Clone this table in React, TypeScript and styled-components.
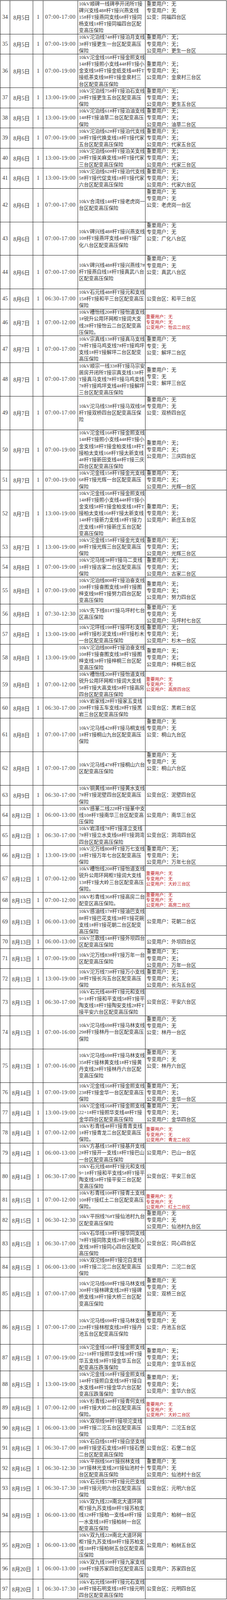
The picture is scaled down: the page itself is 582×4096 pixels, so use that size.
import React from 'react';
import styled, { createGlobalStyle } from 'styled-components';

// one text line of the sheet, in page pixels
const U = 17.17;
const RULE = '#1c1c1c';

type VAlign = 'top' | 'middle' | 'bottom';

interface Outage {
  no: number;
  date: string;
  time: string;
  lines: number;
  desc: string;
  users: string[];
  align?: VAlign;
  red?: boolean;
  pad?: number;
}

const GlobalStyle = createGlobalStyle`
  html, body {
    margin: 0;
    padding: 0;
    background: #fff;
  }
  body {
    font-family: "Liberation Serif", "Noto Sans CJK SC", serif;
    color: #333;
  }
`;

const Sheet = styled.div`
  width: 580.2px;
  margin-top: 1px;
  border-top: 1px solid ${RULE};
  border-left: 1px solid ${RULE};
`;

const Row = styled.div<{ $h: number }>`
  display: grid;
  grid-template-columns: 25px 59.4px 25.7px 88.7px 173px 1fr;
  height: ${(p) => p.$h}px;
  box-sizing: border-box;
  border-bottom: 1px solid ${RULE};
`;

const Cell = styled.div`
  box-sizing: border-box;
  border-right: 1px solid ${RULE};
  display: flex;
  align-items: center;
  justify-content: center;
  overflow: hidden;
  white-space: nowrap;
  font-size: 14px;
`;

const TimeCell = styled(Cell)`
  letter-spacing: 0.9px;
`;

const DescCell = styled(Cell)`
  flex-direction: column;
  align-items: flex-start;
  padding-left: 2.5px;
  font-size: 12.7px;
  line-height: ${U}px;
`;

const UserCell = styled(Cell)<{ $align: VAlign; $red?: boolean; $pad: number }>`
  flex-direction: column;
  align-items: flex-start;
  justify-content: ${(p) =>
    p.$align === 'top' ? 'flex-start' : p.$align === 'bottom' ? 'flex-end' : 'center'};
  padding: ${(p) => p.$pad}px 0 0 ${(p) => (p.$red ? 1.5 : 3)}px;
  font-size: ${(p) => (p.$red ? 11.4 : 12.7)}px;
  line-height: ${(p) => (p.$red ? 13.4 : U)}px;
  color: ${(p) => (p.$red ? '#c0191f' : '#333')};
`;

const Line = styled.div`
  white-space: pre;
`;

const semi = (area: string) => ['重要用户：无；', '专变用户：无；', `公变用户：${area}`];
const short = (area: string) => ['重要用户：无', '专变用户：无', `公变：${area}`];
const full = (area: string) => ['重要用户：无', '专变用户：无', `公变用户：${area}`];
const pub = (area: string) => [`公变用户：${area}`];
const zone = (area: string) => [`公变台区：${area}`];

const outages: Outage[] = [
  { no: 34, date: '8月5日', time: '07:00-17:00', lines: 5, desc: '10kV顺碑一线碑亭开闭所T接|碑兴支线48#杆T接兴燕支线|15#杆T接燕同支线6#杆T接同|杨支线1#杆T接同福四台区配|变高压保险', users: short('同福四台区'), align: 'top' },
  { no: 35, date: '8月5日', time: '07:00-19:00', lines: 3, desc: '10kV沱泊线74#杆T接泊月支线|3#杆T接更生一台区配变高压|保险', users: semi('更生一台区') },
  { no: 36, date: '8月5日', time: '07:00-19:00', lines: 5, desc: '10kV沱金线16#杆T接金照支线|14#杆T接照小支线44#杆T接小|金支线5#杆T接金纸支线4#杆T|接纸茶支线9#杆T接金泉村三|台区配变高压保险', users: semi('金泉村三台区') },
  { no: 37, date: '8月5日', time: '13:00-19:00', lines: 3, desc: '10kV沱泊线75#杆T接泊石支线|2#杆T接更生五台区配变高压|保险', users: semi('更生五台区') },
  { no: 38, date: '8月5日', time: '13:00-19:00', lines: 3, desc: '10kV沱泊线61#杆T接泊油支线|14#杆T接油草二台区配变高压|保险', users: semi('油草二台区') },
  { no: 39, date: '8月6日', time: '07:00-19:00', lines: 3, desc: '10kV沱泊线62#杆T接泊代支线|3#杆T接代换支线1#杆T接代家|五台区配变高压保险', users: semi('代家五台区') },
  { no: 40, date: '8月6日', time: '13:00-19:00', lines: 3, desc: '10kV沱泊线60#杆T接泊关支线|2#杆T接关麻支线3#杆T接代家|三台区配变高压保险', users: semi('代家三台区') },
  { no: 41, date: '8月6日', time: '13:00-19:00', lines: 3, desc: '10kV沱泊线62#杆T接泊代支线|5#杆T接代促支线1#杆T接代家|六台区配变高压保险', users: semi('代家六台区') },
  { no: 42, date: '8月6日', time: '07:00-17:00', lines: 5, desc: '10kV合湾线14#杆T接老虎岗一|台区配变高压保险', users: short('老虎岗一台区'), align: 'top' },
  { no: 43, date: '8月6日', time: '07:00-17:00', lines: 5, desc: '10kV碑兴线48#杆T接兴燕支线|10#杆T接燕坪支线4#杆T接广|化八台区配变高压保险', users: short('广化八台区'), align: 'top' },
  { no: 44, date: '8月6日', time: '07:00-17:00', lines: 5, desc: '10kV碑兴线48#杆T接兴燕线7#|杆T接燕白线1#杆T接真武八台|区配变高压保险', users: short('真武八台区'), align: 'top' },
  { no: 45, date: '8月6日', time: '06:30-17:00', lines: 3, desc: '10kV石元线48#杆T接元和支线|15#杆T接和平三台区配变高压|保险', users: zone('和平三台区') },
  { no: 46, date: '8月7日', time: '07:00-12:00', lines: 4, desc: '10kV槽怡线20#杆T接怡道支线|1#锐升公用环网柜T接润大支|线2#杆T接怡云二台区配变高|压保险。', users: full('怡云二台区'), red: true },
  { no: 47, date: '8月7日', time: '07:00-17:00', lines: 4, desc: '10kV宗真线13#杆T接真马支线|7#杆T接马鸡支线7#杆T接鸡坪|支线1#杆T接解坪二台区配变|高压保险', users: ['重要用户：无', '专变：无', '公变：解坪二台区'], align: 'top' },
  { no: 48, date: '8月7日', time: '07:00-17:00', lines: 5, desc: '10kV顺宗一线33#杆T接马宗安|居房开闭所T接宗真支线13#杆|T接真马支线7#杆T接马鸡支线|7#杆T接鸡坪支线4#杆T接解坪|三台区配变高压保险', users: ['重要用户：无', '专变：无', '公变：解坪三台区'], align: 'top', pad: 10 },
  { no: 49, date: '8月7日', time: '07:00-17:00', lines: 5, desc: '10kV沱马线53#杆T接马双线5#|杆T接双桥四台区配变高压保|险', users: short('双桥四台区'), align: 'top' },
  { no: 50, date: '8月7日', time: '07:00-19:00', lines: 6, desc: '10kV沱金线16#杆T接金照支线|14#杆T接照小支线44#杆T接小|金支线5#杆T接金柏支线1#杆T|接柏太支线16#杆T接太新支线|4#杆T接新田支线4#杆T接三庆|四台区配变高压保险', users: semi('三庆四台区') },
  { no: 51, date: '8月7日', time: '07:00-19:00', lines: 3, desc: '10kV沱金线15#杆T接金光支线|6#杆T接光辉一台区配变高压|保险', users: semi('光辉一台区') },
  { no: 52, date: '8月7日', time: '13:00-19:00', lines: 7, desc: '10kV沱金线16#杆T接金照支线|14#杆T接照小支线44#杆T接小|金支线5#杆T接金柏支线1#杆T|接柏太支线16#杆T接太新支线|14#杆T接新力支线1#杆T接力|庄支线1#杆T接新庄五台区配|变高压保险', users: semi('新庄五台区') },
  { no: 53, date: '8月7日', time: '13:00-19:00', lines: 3, desc: '10kV沱金线15#杆T接金光支线|8#杆T接光辉三台区配变高压|保险', users: semi('光辉三台区') },
  { no: 54, date: '8月8日', time: '07:00-19:00', lines: 3, desc: '10kV沱马线3#杆T接马二支线|1#杆T接古家二台区配变高压|保险', users: semi('古家二台区') },
  { no: 55, date: '8月8日', time: '07:00-19:00', lines: 4, desc: '10kV沱泊线80#杆T接泊奋支线|10#杆T接奋图支线3#杆T接图|梓支线9#杆T接努力四台区配|变高压保险', users: semi('努力四台区') },
  { no: 56, date: '8月8日', time: '07:30-12:30', lines: 3, desc: '10kV先下线81#T接马坪村七台|区高压保险', users: full('马坪村七台区') },
  { no: 57, date: '8月8日', time: '13:00-19:00', lines: 3, desc: '10kV沱坪线19#杆T接坪杉支线|4#杆T接杉泥支线1#杆T接杉木|一台区配变高压保险', users: semi('杉木一台区') },
  { no: 58, date: '8月8日', time: '13:00-19:00', lines: 4, desc: '10kV沱泊线80#杆T接泊奋支线|10#杆T接奋图支线3#杆T接图|梓支线3#杆T接梓桐三台区配|变高压保险', users: semi('梓桐三台区') },
  { no: 59, date: '8月8日', time: '07:00-12:00', lines: 4, desc: '10kV槽怡线20#杆T接怡道支线|锐升公用环网柜T接润大支线|5#杆T接大高支线5#杆T接高房|四台区配变高压保险', users: full('高房四台区'), red: true },
  { no: 60, date: '8月8日', time: '06:30-17:00', lines: 3, desc: '10kV岩家线2#杆T接家五支线|20#杆T接五车支线2#杆T接黑|岩三台区配变高压保险', users: zone('黑岩三台区') },
  { no: 61, date: '8月8日', time: '07:00-17:00', lines: 5, desc: '10kV沱马线42#杆T接马桐支线|1#杆T接桐山九台区配变高压|保险', users: short('桐山九台区'), align: 'top' },
  { no: 62, date: '8月8日', time: '07:00-17:00', lines: 5, desc: '10kV沱马线47#杆T接桐山六台|区配变高压保险', users: short('桐山六台区'), align: 'top' },
  { no: 63, date: '8月9日', time: '06:30-17:00', lines: 3, desc: '10kV铜黄线38#杆T接黄水支线|7#杆T接泥壁四台区配变高压|保险', users: zone('泥壁四台区') },
  { no: 64, date: '8月12日', time: '06:00-13:00', lines: 3, desc: '10kV感篆二线22#杆T接篆中支|线10#杆T接南华三台区配变高|压保险', users: pub('南华三台区') },
  { no: 65, date: '8月12日', time: '06:30-17:00', lines: 3, desc: '10kV岩泽线7#杆T接泽立支线|7#杆T接立水支线6#杆T接洞湾|四台区配变高压保险', users: zone('洞湾四台区') },
  { no: 66, date: '8月12日', time: '13:00-19:00', lines: 3, desc: '10kV沱万线80#杆T接万七支线|1#杆T接万年七台区配变高压|保险', users: semi('万年七台区') },
  { no: 67, date: '8月12日', time: '07:00-12:00', lines: 4, desc: '10kV槽怡线20#杆T接怡道支线|锐升公用环网柜T接润大支线|13#杆T接大岭三台区配变高压|保险。', users: full('大岭三台区'), red: true },
  { no: 68, date: '8月13日', time: '07:00-12:00', lines: 2.36, desc: '10kV杉青线36#杆T接高房二台|配变区高压保险。', users: full('高房二台区'), red: true, align: 'bottom' },
  { no: 69, date: '8月13日', time: '06:00-13:00', lines: 4, desc: '10kV感油线17#杆T接油巴支线|8#杆T接巴花支线3#杆T接花碗|支线1#杆T接花朝二台区配变|高压保险', users: pub('花朝二台区') },
  { no: 70, date: '8月13日', time: '06:00-13:00', lines: 2, desc: '10kV兰歌线14#杆T接外坝四台|区配变高压保险', users: pub('外坝四台区') },
  { no: 71, date: '8月13日', time: '07:00-19:00', lines: 3, desc: '10kV沱万线83#杆T接万年一台|区配变高压保险', users: semi('万年一台区') },
  { no: 72, date: '8月13日', time: '13:00-19:00', lines: 3, desc: '10kV沱万线73#杆T接万小支线|3#杆T接长沟五台区配变高压|保险', users: semi('长沟五台区') },
  { no: 73, date: '8月13日', time: '06:30-17:00', lines: 4, desc: '10kV石元线48#杆T接元和支线|9+1#杆T接和平支线5#杆T接平|陶支线1#杆T接陶安支线2#杆T|接平安六台区配变高压保险', users: zone('平安六台区') },
  { no: 74, date: '8月13日', time: '07:00-16:00', lines: 5, desc: '10kV沱马线69#杆T接马林支线|29#杆T接林丹一台区配变高压|保险', users: short('林丹一台区'), align: 'top' },
  { no: 75, date: '8月13日', time: '07:00-16:00', lines: 5, desc: '10kV沱马线69#杆T接马林支线|35#杆T接林黄支线1#杆T接黄|丹支线2#杆T接林丹六台区配|变高压保险', users: short('林丹六台区'), align: 'top' },
  { no: 76, date: '8月14日', time: '07:00-19:00', lines: 3, desc: '10kV沱金线16#杆T接金照支线|23#杆T接金华一台区配变高压|保险', users: semi('金华一台区') },
  { no: 77, date: '8月14日', time: '13:00-19:00', lines: 3, desc: '10kV沱金线16#杆T接金照支线|22+1#杆T接照华支线4#杆T接|金华四台区配变高压保险', users: semi('金华四台区') },
  { no: 78, date: '8月14日', time: '07:00-12:00', lines: 3, desc: '10kV杉青线4#杆T接青青支线|1#杆T接青龙二台区配变高压|保险。', users: full('青龙二台区'), red: true, align: 'bottom' },
  { no: 79, date: '8月14日', time: '06:00-13:00', lines: 3, desc: '10kV方基线15#杆T接基开支线|2#杆T接开一支线1#杆T接巴山|一台区配变高压保险', users: pub('巴山一台区') },
  { no: 80, date: '8月14日', time: '06:30-17:00', lines: 4, desc: '10kV石元线48#杆T接元和支线|9+1#杆T接和平支线5#杆T接平|陶支线5#杆T接平安三台区配|变高压保险', users: zone('平安三台区') },
  { no: 81, date: '8月15日', time: '07:00-12:00', lines: 3, desc: '10kV杉青线10#杆T接青土支线|10#杆T接红土二台区配变高压|保险。', users: full('红土二台区'), red: true, align: 'bottom' },
  { no: 82, date: '8月15日', time: '06:30-12:30', lines: 3, desc: '10kV平拐线76#T接仙池村九台|区配变高压保险', users: full('仙池村九台区') },
  { no: 83, date: '8月15日', time: '06:30-17:00', lines: 4, desc: '10kV石华线13#杆T接华同支线|7#杆T接同陈支线2#杆T接陈心|支线3#杆T接同心四台区配变|高压保险', users: zone('同心四台区') },
  { no: 84, date: '8月15日', time: '06:00-13:00', lines: 3, desc: '10kV双沱线8#杆T接沱白支线|1#杆T接二沱二台区配变高压|保险', users: pub('二沱二台区') },
  { no: 85, date: '8月15日', time: '07:00-17:00', lines: 5, desc: '10kV沱马线69#杆T接马林支线|30#杆T接林碑支线2#杆T接碑|桥支线3#杆T接大桥三台区配|变高压保险', users: short('双桥三台区'), align: 'top' },
  { no: 86, date: '8月15日', time: '07:00-17:00', lines: 5, desc: '10kV沱马线69#杆T接马林支线|22#杆T接林柑支线2#杆T接丹|池五台区配变高压保险', users: short('丹池五台区'), align: 'top' },
  { no: 87, date: '8月15日', time: '07:00-19:00', lines: 4, desc: '10kV沱金线16#杆T接金照支线|22+1#杆T接照华支线3#杆T接|华五支线3#杆T接金华五台区|配变高压跌落保险', users: semi('金华五台区') },
  { no: 88, date: '8月15日', time: '13:00-19:00', lines: 4, desc: '10kV沱金线16#杆T接金照支线|14#杆T接照白支线5#杆T接白|水支线4#杆T接金华六台区配|变高压跌落保险', users: semi('金华六台区') },
  { no: 89, date: '8月16日', time: '07:00-12:00', lines: 3, desc: '10kV杉青线24#杆T接青何支线|1#杆T接大岭二台区配变高压|保险。', users: full('大岭二台区'), red: true, align: 'bottom' },
  { no: 90, date: '8月16日', time: '06:00-13:00', lines: 3, desc: '10kV双坝线9#杆T接坝沱支线|3#杆T接二沱五台区配变高压|保险', users: pub('二沱五台区') },
  { no: 91, date: '8月16日', time: '06:30-17:00', lines: 3, desc: '10kV石白线61#杆T接白坚支线|8#杆T接坚石支线5#杆T接石堡|二台区配变高压保险', users: zone('石堡二台区') },
  { no: 92, date: '8月16日', time: '06:30-12:30', lines: 3, desc: '10kV平拐线56#T接拐林支线|3#T接林光支线2#T接仙池村十|台区配变高压保险', users: full('仙池村十台区') },
  { no: 93, date: '8月19日', time: '06:30-17:30', lines: 3, desc: '10kV石元线57#杆T接元巴支线|3#杆T接元明六台区配变高压|保险', users: zone('元明六台区') },
  { no: 94, date: '8月19日', time: '06:00-13:00', lines: 5, desc: '10kV双九线22#南北大道环网|柜T接九苏支线8#杆T接苏柏支|线12#杆T接柏一支线4#杆T接|一水支线1#杆T接柏树一台区|配变高压保险', users: pub('柏树一台区') },
  { no: 95, date: '8月20日', time: '06:00-13:00', lines: 4, desc: '10kV双九线22#南北大道环网|柜T接九苏支线8#杆T接苏柏支|线18#杆T接柏树五台区配变高|压保险', users: pub('柏树五台区') },
  { no: 96, date: '8月20日', time: '06:00-13:00', lines: 3, desc: '10kV双九线19#杆T接九家支线|19#杆T接苏家四台区配变高压|保险', users: pub('苏家四台区') },
  { no: 97, date: '8月20日', time: '06:30-17:30', lines: 3, desc: '10kV石元线58#杆T接元石支线|4#杆T接石明支线1#杆T接元明|四台区配变高压保险', users: zone('元明四台区') },
];

const OutageRow = ({ item }: { item: Outage }) => (
  <Row $h={item.lines * U}>
    <Cell>{item.no}</Cell>
    <Cell>{item.date}</Cell>
    <Cell>1</Cell>
    <TimeCell>{item.time}</TimeCell>
    <DescCell>
      {item.desc.split('|').map((text, i) => (
        <Line key={i}>{text}</Line>
      ))}
    </DescCell>
    <UserCell $align={item.align ?? 'middle'} $red={item.red} $pad={item.pad ?? 0}>
      {item.users.map((text, i) => (
        <Line key={i}>{text}</Line>
      ))}
    </UserCell>
  </Row>
);

export default function App() {
  return (
    <>
      <GlobalStyle />
      <Sheet>
        {outages.map((item) => (
          <OutageRow key={item.no} item={item} />
        ))}
      </Sheet>
    </>
  );
}
